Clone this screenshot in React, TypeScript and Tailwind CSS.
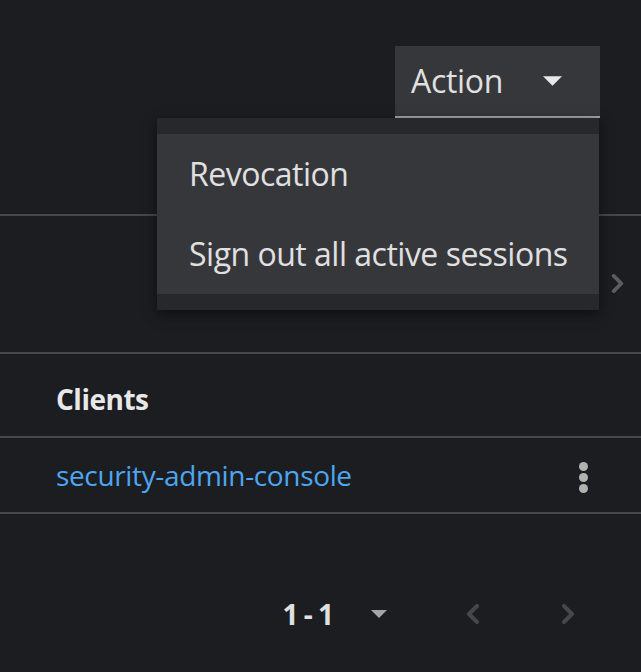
import React from "react";

const Caret = ({ className }: { className?: string }) => (
  <svg viewBox="0 0 20 10" className={className} fill="currentColor">
    <path d="M0 0h20L10 10z" />
  </svg>
);

const Chevron = ({ dir, className }: { dir: "left" | "right"; className?: string }) => (
  <svg viewBox="0 0 14 20" className={className} fill="none" stroke="currentColor" strokeWidth="4" strokeLinecap="round" strokeLinejoin="round">
    {dir === "right" ? <path d="M3 2l8 8-8 8" /> : <path d="M11 2l-8 8 8 8" />}
  </svg>
);

export default function App() {
  return (
    <div
      className="min-h-screen w-full bg-[#1b1d21] text-[#e0e0e0]"
      style={{ fontFamily: '"Open Sans", "Noto Sans", sans-serif' }}
    >
      {/* toolbar */}
      <div className="flex h-[216px] justify-end border-b-2 border-[#45474a] pr-[41px] pt-[46px]">
        <div className="relative h-max">
          <button className="flex h-[72px] w-[205px] items-center justify-between border-b-2 border-[#a3a3a3] bg-[#36373b] pl-4 pr-[38px] text-[32px] tracking-[-0.3px] text-[#e0e0e0]">
            <span>Action</span>
            <Caret className="h-[10px] w-[19px] text-[#e8e8e8]" />
          </button>
          <div className="absolute right-[1px] top-[72px] z-10 w-[442px] bg-[#27282c] py-4 shadow-[0_4px_12px_rgba(0,0,0,0.5)]">
            <div className="bg-[#36373b] text-[32px] tracking-[-0.5px] text-[#e0e0e0]">
              <div className="flex h-20 items-center px-8">Revocation</div>
              <div className="flex h-20 items-center whitespace-nowrap px-8">Sign out all active sessions</div>
            </div>
          </div>
        </div>
      </div>

      {/* tabs area */}
      <div className="flex h-[138px] items-start justify-end border-b-2 border-[#45474a] pr-[16px] pt-[58px]">
        <Chevron dir="right" className="h-[19px] w-[15px] text-[#5b5d61]" />
      </div>

      {/* table */}
      <div className="flex h-[84px] items-center border-b-2 border-[#45474a] pl-14 pt-2 text-[28px] font-bold tracking-[-0.5px] text-[#e8e8e8]">
        Clients
      </div>
      <div className="flex h-[76px] items-center justify-between border-b-2 border-[#45474a] pl-14 pr-[53px]">
        <a className="text-[28px] tracking-[-0.35px] text-[#4ea5f0]">security-admin-console</a>
        <div className="flex flex-col items-center gap-[2px] pt-1">
          <span className="h-[9px] w-[9px] rounded-full bg-[#b1b1b1]" />
          <span className="h-[9px] w-[9px] rounded-full bg-[#b1b1b1]" />
          <span className="h-[9px] w-[9px] rounded-full bg-[#b1b1b1]" />
        </div>
      </div>

      {/* pagination */}
      <div className="flex items-center justify-end pr-[66px] pt-[79px]">
        <span className="text-[28px] font-bold tracking-[-1px] text-[#e0e0e0]">1 - 1</span>
        <Caret className="ml-[38px] h-[8px] w-[16px] text-[#a5a5a5]" />
        <Chevron dir="left" className="ml-[79px] h-[20px] w-[14px] text-[#45474b]" />
        <Chevron dir="right" className="ml-[81px] h-[20px] w-[14px] text-[#45474b]" />
      </div>
    </div>
  );
}
